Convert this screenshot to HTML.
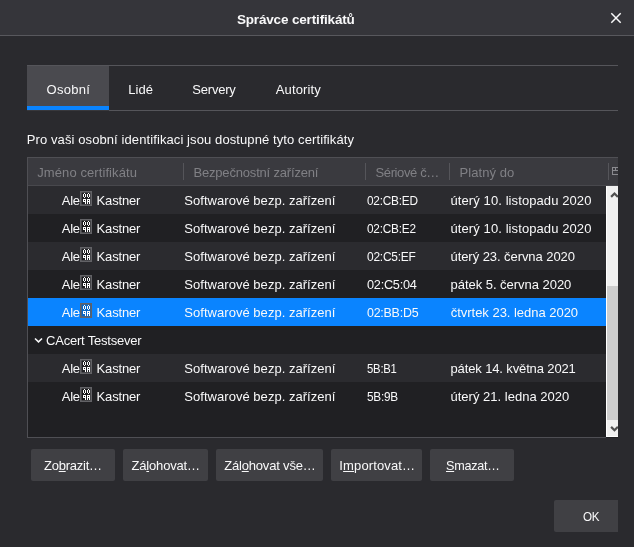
<!DOCTYPE html>
<html><head><meta charset="utf-8"><title>Správce certifikátů</title>
<style>
html,body{margin:0;padding:0}
body{width:634px;height:547px;background:#2a2a2e;position:relative;overflow:hidden;font-family:"Liberation Sans",sans-serif;font-size:13px;color:#f9f9fa}
div,span,svg{position:absolute;box-sizing:border-box}
.t{white-space:pre;line-height:20px;height:20px}
.t u{text-decoration:underline;text-underline-offset:1px;text-decoration-thickness:1px}
.btn{background:#404044;border-radius:2px;height:32px}
.row{left:28px;width:578px;height:28px}
.lt{background:#2b2b2f}
.sep{width:1px;top:163px;height:17px;background:#55555a}
</style></head><body>
<div id="titlebar" style="left:0;top:0;width:634px;height:36px;background:#35353a;border-bottom:1px solid #58585d"></div>
<svg style="left:610px;top:12px" width="12" height="12" viewBox="0 0 12 12"><path d="M1.3 1.3 L10.7 10.7 M10.7 1.3 L1.3 10.7" stroke="#f9f9fa" stroke-width="1.5" fill="none"/></svg>
<div id="tabs" style="left:27px;top:65px;width:591px;height:46px;border-top:1px solid #55555a;border-bottom:1px solid #55555a"></div>
<div id="tabsel" style="left:27px;top:66px;width:82px;height:44px;background:#4a4a4f;border-bottom:4px solid #0a84ff"></div>
<div style="left:27px;top:110px;width:82px;height:1px;background:#38383c"></div>
<div id="list" style="left:27px;top:157px;width:591px;height:281px;background:#202023;border-left:1px solid #4f4f54;border-top:1px solid #4f4f54"></div>
<div id="lbot" style="left:27px;top:437px;width:579px;height:1px;background:#4f4f54"></div>
<div id="lhead" style="left:28px;top:158px;width:590px;height:28px;background:#3a3a3f;border-bottom:1px solid #48484d"></div>
<div class="sep" style="left:183px"></div><div class="sep" style="left:365px"></div><div class="sep" style="left:449px"></div><div class="sep" style="left:608px"></div>
<svg style="left:612px;top:167px" width="6" height="8" viewBox="0 0 6 8" shape-rendering="crispEdges"><path d="M6 0.5 H0.5 V7.5 H6 M0.5 3.5 H6 M3.5 0.5 V3.5" stroke="#8a8a8f" stroke-width="1" fill="none"/></svg>

<div class="row lt" style="top:186px"></div>
<div class="row lt" style="top:242px"></div>
<div class="row lt" style="top:354px"></div>
<div class="row" style="top:298px;background:#0a84ff"></div>
<div id="sb" style="left:606px;top:186px;width:12px;height:251px;background:#f0f0f0;border-left:1px solid #ffffff;border-bottom:1px solid #ffffff"></div>
<div id="thumb" style="left:607px;top:286px;width:11px;height:134px;background:#cdcdcd"></div>
<svg style="left:606px;top:186px" width="12" height="17" viewBox="0 0 12 17"><path d="M5.1 10.9 L8.5 7.5 L11.9 10.9" stroke="#505050" stroke-width="2.2" fill="none"/></svg>
<svg style="left:606px;top:420px" width="12" height="17" viewBox="0 0 12 17"><path d="M5.1 6.9 L8.5 10.3 L11.9 6.9" stroke="#505050" stroke-width="2.2" fill="none"/></svg>
<svg style="left:33.7px;top:337px" width="9" height="7" viewBox="0 0 9 7"><path d="M1 1.5 L4.5 4.8 L8 1.5" stroke="#f9f9fa" stroke-width="1.6" fill="none"/></svg>

<svg class="hb" style="left:80px;top:191px" width="12" height="15" viewBox="0 0 12 15"><rect x="0.8" y="0.8" width="10.4" height="13.4" fill="rgba(0,0,0,0.22)" stroke="#626266" stroke-width="1.6"/><rect x="4" y="2" width="1" height="1" fill="#fff" shape-rendering="crispEdges"/><rect x="3" y="3" width="1" height="1" fill="#fff" shape-rendering="crispEdges"/><rect x="5" y="3" width="1" height="1" fill="#fff" shape-rendering="crispEdges"/><rect x="3" y="4" width="1" height="1" fill="#fff" shape-rendering="crispEdges"/><rect x="5" y="4" width="1" height="1" fill="#fff" shape-rendering="crispEdges"/><rect x="3" y="5" width="1" height="1" fill="#fff" shape-rendering="crispEdges"/><rect x="5" y="5" width="1" height="1" fill="#fff" shape-rendering="crispEdges"/><rect x="4" y="6" width="1" height="1" fill="#fff" shape-rendering="crispEdges"/><rect x="8" y="2" width="1" height="1" fill="#fff" shape-rendering="crispEdges"/><rect x="7" y="3" width="1" height="1" fill="#fff" shape-rendering="crispEdges"/><rect x="9" y="3" width="1" height="1" fill="#fff" shape-rendering="crispEdges"/><rect x="7" y="4" width="1" height="1" fill="#fff" shape-rendering="crispEdges"/><rect x="9" y="4" width="1" height="1" fill="#fff" shape-rendering="crispEdges"/><rect x="7" y="5" width="1" height="1" fill="#fff" shape-rendering="crispEdges"/><rect x="9" y="5" width="1" height="1" fill="#fff" shape-rendering="crispEdges"/><rect x="8" y="6" width="1" height="1" fill="#fff" shape-rendering="crispEdges"/><rect x="3" y="8" width="1" height="1" fill="#fff" shape-rendering="crispEdges"/><rect x="4" y="8" width="1" height="1" fill="#fff" shape-rendering="crispEdges"/><rect x="5" y="8" width="1" height="1" fill="#fff" shape-rendering="crispEdges"/><rect x="3" y="9" width="1" height="1" fill="#fff" shape-rendering="crispEdges"/><rect x="5" y="9" width="1" height="1" fill="#fff" shape-rendering="crispEdges"/><rect x="3" y="10" width="1" height="1" fill="#fff" shape-rendering="crispEdges"/><rect x="4" y="10" width="1" height="1" fill="#fff" shape-rendering="crispEdges"/><rect x="5" y="10" width="1" height="1" fill="#fff" shape-rendering="crispEdges"/><rect x="5" y="11" width="1" height="1" fill="#fff" shape-rendering="crispEdges"/><rect x="5" y="12" width="1" height="1" fill="#fff" shape-rendering="crispEdges"/><rect x="7" y="8" width="1" height="1" fill="#fff" shape-rendering="crispEdges"/><rect x="8" y="8" width="1" height="1" fill="#fff" shape-rendering="crispEdges"/><rect x="9" y="8" width="1" height="1" fill="#fff" shape-rendering="crispEdges"/><rect x="7" y="9" width="1" height="1" fill="#fff" shape-rendering="crispEdges"/><rect x="9" y="9" width="1" height="1" fill="#fff" shape-rendering="crispEdges"/><rect x="7" y="10" width="1" height="1" fill="#fff" shape-rendering="crispEdges"/><rect x="8" y="10" width="1" height="1" fill="#fff" shape-rendering="crispEdges"/><rect x="9" y="10" width="1" height="1" fill="#fff" shape-rendering="crispEdges"/><rect x="7" y="11" width="1" height="1" fill="#fff" shape-rendering="crispEdges"/><rect x="9" y="11" width="1" height="1" fill="#fff" shape-rendering="crispEdges"/><rect x="7" y="12" width="1" height="1" fill="#fff" shape-rendering="crispEdges"/><rect x="9" y="12" width="1" height="1" fill="#fff" shape-rendering="crispEdges"/></svg>
<svg class="hb" style="left:80px;top:219px" width="12" height="15" viewBox="0 0 12 15"><rect x="0.8" y="0.8" width="10.4" height="13.4" fill="rgba(0,0,0,0.22)" stroke="#626266" stroke-width="1.6"/><rect x="4" y="2" width="1" height="1" fill="#fff" shape-rendering="crispEdges"/><rect x="3" y="3" width="1" height="1" fill="#fff" shape-rendering="crispEdges"/><rect x="5" y="3" width="1" height="1" fill="#fff" shape-rendering="crispEdges"/><rect x="3" y="4" width="1" height="1" fill="#fff" shape-rendering="crispEdges"/><rect x="5" y="4" width="1" height="1" fill="#fff" shape-rendering="crispEdges"/><rect x="3" y="5" width="1" height="1" fill="#fff" shape-rendering="crispEdges"/><rect x="5" y="5" width="1" height="1" fill="#fff" shape-rendering="crispEdges"/><rect x="4" y="6" width="1" height="1" fill="#fff" shape-rendering="crispEdges"/><rect x="8" y="2" width="1" height="1" fill="#fff" shape-rendering="crispEdges"/><rect x="7" y="3" width="1" height="1" fill="#fff" shape-rendering="crispEdges"/><rect x="9" y="3" width="1" height="1" fill="#fff" shape-rendering="crispEdges"/><rect x="7" y="4" width="1" height="1" fill="#fff" shape-rendering="crispEdges"/><rect x="9" y="4" width="1" height="1" fill="#fff" shape-rendering="crispEdges"/><rect x="7" y="5" width="1" height="1" fill="#fff" shape-rendering="crispEdges"/><rect x="9" y="5" width="1" height="1" fill="#fff" shape-rendering="crispEdges"/><rect x="8" y="6" width="1" height="1" fill="#fff" shape-rendering="crispEdges"/><rect x="3" y="8" width="1" height="1" fill="#fff" shape-rendering="crispEdges"/><rect x="4" y="8" width="1" height="1" fill="#fff" shape-rendering="crispEdges"/><rect x="5" y="8" width="1" height="1" fill="#fff" shape-rendering="crispEdges"/><rect x="3" y="9" width="1" height="1" fill="#fff" shape-rendering="crispEdges"/><rect x="5" y="9" width="1" height="1" fill="#fff" shape-rendering="crispEdges"/><rect x="3" y="10" width="1" height="1" fill="#fff" shape-rendering="crispEdges"/><rect x="4" y="10" width="1" height="1" fill="#fff" shape-rendering="crispEdges"/><rect x="5" y="10" width="1" height="1" fill="#fff" shape-rendering="crispEdges"/><rect x="5" y="11" width="1" height="1" fill="#fff" shape-rendering="crispEdges"/><rect x="5" y="12" width="1" height="1" fill="#fff" shape-rendering="crispEdges"/><rect x="7" y="8" width="1" height="1" fill="#fff" shape-rendering="crispEdges"/><rect x="8" y="8" width="1" height="1" fill="#fff" shape-rendering="crispEdges"/><rect x="9" y="8" width="1" height="1" fill="#fff" shape-rendering="crispEdges"/><rect x="7" y="9" width="1" height="1" fill="#fff" shape-rendering="crispEdges"/><rect x="9" y="9" width="1" height="1" fill="#fff" shape-rendering="crispEdges"/><rect x="7" y="10" width="1" height="1" fill="#fff" shape-rendering="crispEdges"/><rect x="8" y="10" width="1" height="1" fill="#fff" shape-rendering="crispEdges"/><rect x="9" y="10" width="1" height="1" fill="#fff" shape-rendering="crispEdges"/><rect x="7" y="11" width="1" height="1" fill="#fff" shape-rendering="crispEdges"/><rect x="9" y="11" width="1" height="1" fill="#fff" shape-rendering="crispEdges"/><rect x="7" y="12" width="1" height="1" fill="#fff" shape-rendering="crispEdges"/><rect x="9" y="12" width="1" height="1" fill="#fff" shape-rendering="crispEdges"/></svg>
<svg class="hb" style="left:80px;top:247px" width="12" height="15" viewBox="0 0 12 15"><rect x="0.8" y="0.8" width="10.4" height="13.4" fill="rgba(0,0,0,0.22)" stroke="#626266" stroke-width="1.6"/><rect x="4" y="2" width="1" height="1" fill="#fff" shape-rendering="crispEdges"/><rect x="3" y="3" width="1" height="1" fill="#fff" shape-rendering="crispEdges"/><rect x="5" y="3" width="1" height="1" fill="#fff" shape-rendering="crispEdges"/><rect x="3" y="4" width="1" height="1" fill="#fff" shape-rendering="crispEdges"/><rect x="5" y="4" width="1" height="1" fill="#fff" shape-rendering="crispEdges"/><rect x="3" y="5" width="1" height="1" fill="#fff" shape-rendering="crispEdges"/><rect x="5" y="5" width="1" height="1" fill="#fff" shape-rendering="crispEdges"/><rect x="4" y="6" width="1" height="1" fill="#fff" shape-rendering="crispEdges"/><rect x="8" y="2" width="1" height="1" fill="#fff" shape-rendering="crispEdges"/><rect x="7" y="3" width="1" height="1" fill="#fff" shape-rendering="crispEdges"/><rect x="9" y="3" width="1" height="1" fill="#fff" shape-rendering="crispEdges"/><rect x="7" y="4" width="1" height="1" fill="#fff" shape-rendering="crispEdges"/><rect x="9" y="4" width="1" height="1" fill="#fff" shape-rendering="crispEdges"/><rect x="7" y="5" width="1" height="1" fill="#fff" shape-rendering="crispEdges"/><rect x="9" y="5" width="1" height="1" fill="#fff" shape-rendering="crispEdges"/><rect x="8" y="6" width="1" height="1" fill="#fff" shape-rendering="crispEdges"/><rect x="3" y="8" width="1" height="1" fill="#fff" shape-rendering="crispEdges"/><rect x="4" y="8" width="1" height="1" fill="#fff" shape-rendering="crispEdges"/><rect x="5" y="8" width="1" height="1" fill="#fff" shape-rendering="crispEdges"/><rect x="3" y="9" width="1" height="1" fill="#fff" shape-rendering="crispEdges"/><rect x="5" y="9" width="1" height="1" fill="#fff" shape-rendering="crispEdges"/><rect x="3" y="10" width="1" height="1" fill="#fff" shape-rendering="crispEdges"/><rect x="4" y="10" width="1" height="1" fill="#fff" shape-rendering="crispEdges"/><rect x="5" y="10" width="1" height="1" fill="#fff" shape-rendering="crispEdges"/><rect x="5" y="11" width="1" height="1" fill="#fff" shape-rendering="crispEdges"/><rect x="5" y="12" width="1" height="1" fill="#fff" shape-rendering="crispEdges"/><rect x="7" y="8" width="1" height="1" fill="#fff" shape-rendering="crispEdges"/><rect x="8" y="8" width="1" height="1" fill="#fff" shape-rendering="crispEdges"/><rect x="9" y="8" width="1" height="1" fill="#fff" shape-rendering="crispEdges"/><rect x="7" y="9" width="1" height="1" fill="#fff" shape-rendering="crispEdges"/><rect x="9" y="9" width="1" height="1" fill="#fff" shape-rendering="crispEdges"/><rect x="7" y="10" width="1" height="1" fill="#fff" shape-rendering="crispEdges"/><rect x="8" y="10" width="1" height="1" fill="#fff" shape-rendering="crispEdges"/><rect x="9" y="10" width="1" height="1" fill="#fff" shape-rendering="crispEdges"/><rect x="7" y="11" width="1" height="1" fill="#fff" shape-rendering="crispEdges"/><rect x="9" y="11" width="1" height="1" fill="#fff" shape-rendering="crispEdges"/><rect x="7" y="12" width="1" height="1" fill="#fff" shape-rendering="crispEdges"/><rect x="9" y="12" width="1" height="1" fill="#fff" shape-rendering="crispEdges"/></svg>
<svg class="hb" style="left:80px;top:275px" width="12" height="15" viewBox="0 0 12 15"><rect x="0.8" y="0.8" width="10.4" height="13.4" fill="rgba(0,0,0,0.22)" stroke="#626266" stroke-width="1.6"/><rect x="4" y="2" width="1" height="1" fill="#fff" shape-rendering="crispEdges"/><rect x="3" y="3" width="1" height="1" fill="#fff" shape-rendering="crispEdges"/><rect x="5" y="3" width="1" height="1" fill="#fff" shape-rendering="crispEdges"/><rect x="3" y="4" width="1" height="1" fill="#fff" shape-rendering="crispEdges"/><rect x="5" y="4" width="1" height="1" fill="#fff" shape-rendering="crispEdges"/><rect x="3" y="5" width="1" height="1" fill="#fff" shape-rendering="crispEdges"/><rect x="5" y="5" width="1" height="1" fill="#fff" shape-rendering="crispEdges"/><rect x="4" y="6" width="1" height="1" fill="#fff" shape-rendering="crispEdges"/><rect x="8" y="2" width="1" height="1" fill="#fff" shape-rendering="crispEdges"/><rect x="7" y="3" width="1" height="1" fill="#fff" shape-rendering="crispEdges"/><rect x="9" y="3" width="1" height="1" fill="#fff" shape-rendering="crispEdges"/><rect x="7" y="4" width="1" height="1" fill="#fff" shape-rendering="crispEdges"/><rect x="9" y="4" width="1" height="1" fill="#fff" shape-rendering="crispEdges"/><rect x="7" y="5" width="1" height="1" fill="#fff" shape-rendering="crispEdges"/><rect x="9" y="5" width="1" height="1" fill="#fff" shape-rendering="crispEdges"/><rect x="8" y="6" width="1" height="1" fill="#fff" shape-rendering="crispEdges"/><rect x="3" y="8" width="1" height="1" fill="#fff" shape-rendering="crispEdges"/><rect x="4" y="8" width="1" height="1" fill="#fff" shape-rendering="crispEdges"/><rect x="5" y="8" width="1" height="1" fill="#fff" shape-rendering="crispEdges"/><rect x="3" y="9" width="1" height="1" fill="#fff" shape-rendering="crispEdges"/><rect x="5" y="9" width="1" height="1" fill="#fff" shape-rendering="crispEdges"/><rect x="3" y="10" width="1" height="1" fill="#fff" shape-rendering="crispEdges"/><rect x="4" y="10" width="1" height="1" fill="#fff" shape-rendering="crispEdges"/><rect x="5" y="10" width="1" height="1" fill="#fff" shape-rendering="crispEdges"/><rect x="5" y="11" width="1" height="1" fill="#fff" shape-rendering="crispEdges"/><rect x="5" y="12" width="1" height="1" fill="#fff" shape-rendering="crispEdges"/><rect x="7" y="8" width="1" height="1" fill="#fff" shape-rendering="crispEdges"/><rect x="8" y="8" width="1" height="1" fill="#fff" shape-rendering="crispEdges"/><rect x="9" y="8" width="1" height="1" fill="#fff" shape-rendering="crispEdges"/><rect x="7" y="9" width="1" height="1" fill="#fff" shape-rendering="crispEdges"/><rect x="9" y="9" width="1" height="1" fill="#fff" shape-rendering="crispEdges"/><rect x="7" y="10" width="1" height="1" fill="#fff" shape-rendering="crispEdges"/><rect x="8" y="10" width="1" height="1" fill="#fff" shape-rendering="crispEdges"/><rect x="9" y="10" width="1" height="1" fill="#fff" shape-rendering="crispEdges"/><rect x="7" y="11" width="1" height="1" fill="#fff" shape-rendering="crispEdges"/><rect x="9" y="11" width="1" height="1" fill="#fff" shape-rendering="crispEdges"/><rect x="7" y="12" width="1" height="1" fill="#fff" shape-rendering="crispEdges"/><rect x="9" y="12" width="1" height="1" fill="#fff" shape-rendering="crispEdges"/></svg>
<svg class="hb" style="left:80px;top:303px" width="12" height="15" viewBox="0 0 12 15"><rect x="0.8" y="0.8" width="10.4" height="13.4" fill="rgba(0,0,0,0.22)" stroke="#626266" stroke-width="1.6"/><rect x="4" y="2" width="1" height="1" fill="#fff" shape-rendering="crispEdges"/><rect x="3" y="3" width="1" height="1" fill="#fff" shape-rendering="crispEdges"/><rect x="5" y="3" width="1" height="1" fill="#fff" shape-rendering="crispEdges"/><rect x="3" y="4" width="1" height="1" fill="#fff" shape-rendering="crispEdges"/><rect x="5" y="4" width="1" height="1" fill="#fff" shape-rendering="crispEdges"/><rect x="3" y="5" width="1" height="1" fill="#fff" shape-rendering="crispEdges"/><rect x="5" y="5" width="1" height="1" fill="#fff" shape-rendering="crispEdges"/><rect x="4" y="6" width="1" height="1" fill="#fff" shape-rendering="crispEdges"/><rect x="8" y="2" width="1" height="1" fill="#fff" shape-rendering="crispEdges"/><rect x="7" y="3" width="1" height="1" fill="#fff" shape-rendering="crispEdges"/><rect x="9" y="3" width="1" height="1" fill="#fff" shape-rendering="crispEdges"/><rect x="7" y="4" width="1" height="1" fill="#fff" shape-rendering="crispEdges"/><rect x="9" y="4" width="1" height="1" fill="#fff" shape-rendering="crispEdges"/><rect x="7" y="5" width="1" height="1" fill="#fff" shape-rendering="crispEdges"/><rect x="9" y="5" width="1" height="1" fill="#fff" shape-rendering="crispEdges"/><rect x="8" y="6" width="1" height="1" fill="#fff" shape-rendering="crispEdges"/><rect x="3" y="8" width="1" height="1" fill="#fff" shape-rendering="crispEdges"/><rect x="4" y="8" width="1" height="1" fill="#fff" shape-rendering="crispEdges"/><rect x="5" y="8" width="1" height="1" fill="#fff" shape-rendering="crispEdges"/><rect x="3" y="9" width="1" height="1" fill="#fff" shape-rendering="crispEdges"/><rect x="5" y="9" width="1" height="1" fill="#fff" shape-rendering="crispEdges"/><rect x="3" y="10" width="1" height="1" fill="#fff" shape-rendering="crispEdges"/><rect x="4" y="10" width="1" height="1" fill="#fff" shape-rendering="crispEdges"/><rect x="5" y="10" width="1" height="1" fill="#fff" shape-rendering="crispEdges"/><rect x="5" y="11" width="1" height="1" fill="#fff" shape-rendering="crispEdges"/><rect x="5" y="12" width="1" height="1" fill="#fff" shape-rendering="crispEdges"/><rect x="7" y="8" width="1" height="1" fill="#fff" shape-rendering="crispEdges"/><rect x="8" y="8" width="1" height="1" fill="#fff" shape-rendering="crispEdges"/><rect x="9" y="8" width="1" height="1" fill="#fff" shape-rendering="crispEdges"/><rect x="7" y="9" width="1" height="1" fill="#fff" shape-rendering="crispEdges"/><rect x="9" y="9" width="1" height="1" fill="#fff" shape-rendering="crispEdges"/><rect x="7" y="10" width="1" height="1" fill="#fff" shape-rendering="crispEdges"/><rect x="8" y="10" width="1" height="1" fill="#fff" shape-rendering="crispEdges"/><rect x="9" y="10" width="1" height="1" fill="#fff" shape-rendering="crispEdges"/><rect x="7" y="11" width="1" height="1" fill="#fff" shape-rendering="crispEdges"/><rect x="9" y="11" width="1" height="1" fill="#fff" shape-rendering="crispEdges"/><rect x="7" y="12" width="1" height="1" fill="#fff" shape-rendering="crispEdges"/><rect x="9" y="12" width="1" height="1" fill="#fff" shape-rendering="crispEdges"/></svg>
<svg class="hb" style="left:80px;top:359px" width="12" height="15" viewBox="0 0 12 15"><rect x="0.8" y="0.8" width="10.4" height="13.4" fill="rgba(0,0,0,0.22)" stroke="#626266" stroke-width="1.6"/><rect x="4" y="2" width="1" height="1" fill="#fff" shape-rendering="crispEdges"/><rect x="3" y="3" width="1" height="1" fill="#fff" shape-rendering="crispEdges"/><rect x="5" y="3" width="1" height="1" fill="#fff" shape-rendering="crispEdges"/><rect x="3" y="4" width="1" height="1" fill="#fff" shape-rendering="crispEdges"/><rect x="5" y="4" width="1" height="1" fill="#fff" shape-rendering="crispEdges"/><rect x="3" y="5" width="1" height="1" fill="#fff" shape-rendering="crispEdges"/><rect x="5" y="5" width="1" height="1" fill="#fff" shape-rendering="crispEdges"/><rect x="4" y="6" width="1" height="1" fill="#fff" shape-rendering="crispEdges"/><rect x="8" y="2" width="1" height="1" fill="#fff" shape-rendering="crispEdges"/><rect x="7" y="3" width="1" height="1" fill="#fff" shape-rendering="crispEdges"/><rect x="9" y="3" width="1" height="1" fill="#fff" shape-rendering="crispEdges"/><rect x="7" y="4" width="1" height="1" fill="#fff" shape-rendering="crispEdges"/><rect x="9" y="4" width="1" height="1" fill="#fff" shape-rendering="crispEdges"/><rect x="7" y="5" width="1" height="1" fill="#fff" shape-rendering="crispEdges"/><rect x="9" y="5" width="1" height="1" fill="#fff" shape-rendering="crispEdges"/><rect x="8" y="6" width="1" height="1" fill="#fff" shape-rendering="crispEdges"/><rect x="3" y="8" width="1" height="1" fill="#fff" shape-rendering="crispEdges"/><rect x="4" y="8" width="1" height="1" fill="#fff" shape-rendering="crispEdges"/><rect x="5" y="8" width="1" height="1" fill="#fff" shape-rendering="crispEdges"/><rect x="3" y="9" width="1" height="1" fill="#fff" shape-rendering="crispEdges"/><rect x="5" y="9" width="1" height="1" fill="#fff" shape-rendering="crispEdges"/><rect x="3" y="10" width="1" height="1" fill="#fff" shape-rendering="crispEdges"/><rect x="4" y="10" width="1" height="1" fill="#fff" shape-rendering="crispEdges"/><rect x="5" y="10" width="1" height="1" fill="#fff" shape-rendering="crispEdges"/><rect x="5" y="11" width="1" height="1" fill="#fff" shape-rendering="crispEdges"/><rect x="5" y="12" width="1" height="1" fill="#fff" shape-rendering="crispEdges"/><rect x="7" y="8" width="1" height="1" fill="#fff" shape-rendering="crispEdges"/><rect x="8" y="8" width="1" height="1" fill="#fff" shape-rendering="crispEdges"/><rect x="9" y="8" width="1" height="1" fill="#fff" shape-rendering="crispEdges"/><rect x="7" y="9" width="1" height="1" fill="#fff" shape-rendering="crispEdges"/><rect x="9" y="9" width="1" height="1" fill="#fff" shape-rendering="crispEdges"/><rect x="7" y="10" width="1" height="1" fill="#fff" shape-rendering="crispEdges"/><rect x="8" y="10" width="1" height="1" fill="#fff" shape-rendering="crispEdges"/><rect x="9" y="10" width="1" height="1" fill="#fff" shape-rendering="crispEdges"/><rect x="7" y="11" width="1" height="1" fill="#fff" shape-rendering="crispEdges"/><rect x="9" y="11" width="1" height="1" fill="#fff" shape-rendering="crispEdges"/><rect x="7" y="12" width="1" height="1" fill="#fff" shape-rendering="crispEdges"/><rect x="9" y="12" width="1" height="1" fill="#fff" shape-rendering="crispEdges"/></svg>
<svg class="hb" style="left:80px;top:387px" width="12" height="15" viewBox="0 0 12 15"><rect x="0.8" y="0.8" width="10.4" height="13.4" fill="rgba(0,0,0,0.22)" stroke="#626266" stroke-width="1.6"/><rect x="4" y="2" width="1" height="1" fill="#fff" shape-rendering="crispEdges"/><rect x="3" y="3" width="1" height="1" fill="#fff" shape-rendering="crispEdges"/><rect x="5" y="3" width="1" height="1" fill="#fff" shape-rendering="crispEdges"/><rect x="3" y="4" width="1" height="1" fill="#fff" shape-rendering="crispEdges"/><rect x="5" y="4" width="1" height="1" fill="#fff" shape-rendering="crispEdges"/><rect x="3" y="5" width="1" height="1" fill="#fff" shape-rendering="crispEdges"/><rect x="5" y="5" width="1" height="1" fill="#fff" shape-rendering="crispEdges"/><rect x="4" y="6" width="1" height="1" fill="#fff" shape-rendering="crispEdges"/><rect x="8" y="2" width="1" height="1" fill="#fff" shape-rendering="crispEdges"/><rect x="7" y="3" width="1" height="1" fill="#fff" shape-rendering="crispEdges"/><rect x="9" y="3" width="1" height="1" fill="#fff" shape-rendering="crispEdges"/><rect x="7" y="4" width="1" height="1" fill="#fff" shape-rendering="crispEdges"/><rect x="9" y="4" width="1" height="1" fill="#fff" shape-rendering="crispEdges"/><rect x="7" y="5" width="1" height="1" fill="#fff" shape-rendering="crispEdges"/><rect x="9" y="5" width="1" height="1" fill="#fff" shape-rendering="crispEdges"/><rect x="8" y="6" width="1" height="1" fill="#fff" shape-rendering="crispEdges"/><rect x="3" y="8" width="1" height="1" fill="#fff" shape-rendering="crispEdges"/><rect x="4" y="8" width="1" height="1" fill="#fff" shape-rendering="crispEdges"/><rect x="5" y="8" width="1" height="1" fill="#fff" shape-rendering="crispEdges"/><rect x="3" y="9" width="1" height="1" fill="#fff" shape-rendering="crispEdges"/><rect x="5" y="9" width="1" height="1" fill="#fff" shape-rendering="crispEdges"/><rect x="3" y="10" width="1" height="1" fill="#fff" shape-rendering="crispEdges"/><rect x="4" y="10" width="1" height="1" fill="#fff" shape-rendering="crispEdges"/><rect x="5" y="10" width="1" height="1" fill="#fff" shape-rendering="crispEdges"/><rect x="5" y="11" width="1" height="1" fill="#fff" shape-rendering="crispEdges"/><rect x="5" y="12" width="1" height="1" fill="#fff" shape-rendering="crispEdges"/><rect x="7" y="8" width="1" height="1" fill="#fff" shape-rendering="crispEdges"/><rect x="8" y="8" width="1" height="1" fill="#fff" shape-rendering="crispEdges"/><rect x="9" y="8" width="1" height="1" fill="#fff" shape-rendering="crispEdges"/><rect x="7" y="9" width="1" height="1" fill="#fff" shape-rendering="crispEdges"/><rect x="9" y="9" width="1" height="1" fill="#fff" shape-rendering="crispEdges"/><rect x="7" y="10" width="1" height="1" fill="#fff" shape-rendering="crispEdges"/><rect x="8" y="10" width="1" height="1" fill="#fff" shape-rendering="crispEdges"/><rect x="9" y="10" width="1" height="1" fill="#fff" shape-rendering="crispEdges"/><rect x="7" y="11" width="1" height="1" fill="#fff" shape-rendering="crispEdges"/><rect x="9" y="11" width="1" height="1" fill="#fff" shape-rendering="crispEdges"/><rect x="7" y="12" width="1" height="1" fill="#fff" shape-rendering="crispEdges"/><rect x="9" y="12" width="1" height="1" fill="#fff" shape-rendering="crispEdges"/></svg>
<div class="btn" style="left:31px;top:449px;width:84px"></div>
<div class="btn" style="left:123px;top:449px;width:85px"></div>
<div class="btn" style="left:216px;top:449px;width:107px"></div>
<div class="btn" style="left:331px;top:449px;width:91px"></div>
<div class="btn" style="left:430px;top:449px;width:84px"></div>
<div class="btn" style="left:554px;top:500px;width:64px;border-radius:2px 0 0 2px"></div>
<div id="txt" style="left:0;top:0;width:634px;height:547px;will-change:transform">
<span class="t" id="title" style="left:236.88px;top:9.7px;font-size:13.5px;font-weight:700;color:#f9f9fa;letter-spacing:-0.157px">Správce certifikátů</span>
<span class="t" id="tab1" style="left:46.59px;top:79.5px;font-size:13px;font-weight:400;color:#f9f9fa;letter-spacing:0.256px">Osobní</span>
<span class="t" id="tab2" style="left:128.35px;top:79.5px;font-size:13px;font-weight:400;color:#f9f9fa;letter-spacing:0.035px">Lidé</span>
<span class="t" id="tab3" style="left:192.31px;top:79.5px;font-size:13px;font-weight:400;color:#f9f9fa;letter-spacing:-0.209px">Servery</span>
<span class="t" id="tab4" style="left:275.76px;top:79.5px;font-size:13px;font-weight:400;color:#f9f9fa;letter-spacing:0.140px">Autority</span>
<span class="t" id="desc" style="left:26.75px;top:129.5px;font-size:13px;font-weight:400;color:#f9f9fa;letter-spacing:0.098px">Pro vaši osobní identifikaci jsou dostupné tyto certifikáty</span>
<span class="t" id="h1" style="left:37.28px;top:162.5px;font-size:13px;font-weight:400;color:#808085;letter-spacing:0.086px">Jméno certifikátu</span>
<span class="t" id="h2" style="left:193.45px;top:162.5px;font-size:13px;font-weight:400;color:#808085;letter-spacing:-0.180px">Bezpečnostní zařízení</span>
<span class="t" id="h3" style="left:375.57px;top:162.5px;font-size:13px;font-weight:400;color:#808085;letter-spacing:-0.390px">Sériové č…</span>
<span class="t" id="h4" style="left:459.57px;top:162.5px;font-size:13px;font-weight:400;color:#808085;letter-spacing:0.063px">Platný do</span>
<span class="t" id="r0a" style="left:61.85px;top:190.5px;font-size:13px;font-weight:400;color:#f9f9fa;letter-spacing:-0.345px">Ale</span>
<span class="t" id="r0k" style="left:96.60px;top:190.5px;font-size:13px;font-weight:400;color:#f9f9fa;letter-spacing:-0.165px">Kastner</span>
<span class="t" id="r0s" style="left:184.37px;top:190.5px;font-size:13px;font-weight:400;color:#f9f9fa;letter-spacing:0.032px">Softwarové bezp. zařízení</span>
<span class="t" id="r0n" style="left:367.04px;top:190.5px;font-size:13px;font-weight:400;color:#f9f9fa;letter-spacing:-0.250px;transform:scaleX(0.9099);transform-origin:0 0">02:CB:ED</span>
<span class="t" id="r0d" style="left:450.51px;top:190.5px;font-size:13px;font-weight:400;color:#f9f9fa;letter-spacing:0.094px">úterý 10. listopadu 2020</span>
<span class="t" id="r1a" style="left:61.85px;top:218.5px;font-size:13px;font-weight:400;color:#f9f9fa;letter-spacing:-0.345px">Ale</span>
<span class="t" id="r1k" style="left:96.60px;top:218.5px;font-size:13px;font-weight:400;color:#f9f9fa;letter-spacing:-0.165px">Kastner</span>
<span class="t" id="r1s" style="left:184.37px;top:218.5px;font-size:13px;font-weight:400;color:#f9f9fa;letter-spacing:0.032px">Softwarové bezp. zařízení</span>
<span class="t" id="r1n" style="left:367.03px;top:218.5px;font-size:13px;font-weight:400;color:#f9f9fa;letter-spacing:-0.250px;transform:scaleX(0.9096);transform-origin:0 0">02:CB:E2</span>
<span class="t" id="r1d" style="left:450.51px;top:218.5px;font-size:13px;font-weight:400;color:#f9f9fa;letter-spacing:0.094px">úterý 10. listopadu 2020</span>
<span class="t" id="r2a" style="left:61.85px;top:246.5px;font-size:13px;font-weight:400;color:#f9f9fa;letter-spacing:-0.345px">Ale</span>
<span class="t" id="r2k" style="left:96.60px;top:246.5px;font-size:13px;font-weight:400;color:#f9f9fa;letter-spacing:-0.165px">Kastner</span>
<span class="t" id="r2s" style="left:184.37px;top:246.5px;font-size:13px;font-weight:400;color:#f9f9fa;letter-spacing:0.032px">Softwarové bezp. zařízení</span>
<span class="t" id="r2n" style="left:367.03px;top:246.5px;font-size:13px;font-weight:400;color:#f9f9fa;letter-spacing:-0.250px;transform:scaleX(0.9180);transform-origin:0 0">02:C5:EF</span>
<span class="t" id="r2d" style="left:450.49px;top:246.5px;font-size:13px;font-weight:400;color:#f9f9fa;letter-spacing:-0.062px">úterý 23. června 2020</span>
<span class="t" id="r3a" style="left:61.85px;top:274.5px;font-size:13px;font-weight:400;color:#f9f9fa;letter-spacing:-0.345px">Ale</span>
<span class="t" id="r3k" style="left:96.60px;top:274.5px;font-size:13px;font-weight:400;color:#f9f9fa;letter-spacing:-0.165px">Kastner</span>
<span class="t" id="r3s" style="left:184.37px;top:274.5px;font-size:13px;font-weight:400;color:#f9f9fa;letter-spacing:0.032px">Softwarové bezp. zařízení</span>
<span class="t" id="r3n" style="left:367.42px;top:274.5px;font-size:13px;font-weight:400;color:#f9f9fa;letter-spacing:-0.250px;transform:scaleX(0.9777);transform-origin:0 0">02:C5:04</span>
<span class="t" id="r3d" style="left:450.52px;top:274.5px;font-size:13px;font-weight:400;color:#f9f9fa;letter-spacing:-0.033px">pátek 5. června 2020</span>
<span class="t" id="r4a" style="left:61.85px;top:302.5px;font-size:13px;font-weight:400;color:#f9f9fa;letter-spacing:-0.345px">Ale</span>
<span class="t" id="r4k" style="left:96.60px;top:302.5px;font-size:13px;font-weight:400;color:#f9f9fa;letter-spacing:-0.165px">Kastner</span>
<span class="t" id="r4s" style="left:184.37px;top:302.5px;font-size:13px;font-weight:400;color:#f9f9fa;letter-spacing:0.032px">Softwarové bezp. zařízení</span>
<span class="t" id="r4n" style="left:366.99px;top:302.5px;font-size:13px;font-weight:400;color:#f9f9fa;letter-spacing:-0.250px;transform:scaleX(0.9565);transform-origin:0 0">02:BB:D5</span>
<span class="t" id="r4d" style="left:450.78px;top:302.5px;font-size:13px;font-weight:400;color:#f9f9fa;letter-spacing:-0.029px">čtvrtek 23. ledna 2020</span>
<span class="t" id="r5a" style="left:61.85px;top:358.5px;font-size:13px;font-weight:400;color:#f9f9fa;letter-spacing:-0.345px">Ale</span>
<span class="t" id="r5k" style="left:96.60px;top:358.5px;font-size:13px;font-weight:400;color:#f9f9fa;letter-spacing:-0.165px">Kastner</span>
<span class="t" id="r5s" style="left:184.37px;top:358.5px;font-size:13px;font-weight:400;color:#f9f9fa;letter-spacing:0.032px">Softwarové bezp. zařízení</span>
<span class="t" id="r5n" style="left:367.03px;top:358.5px;font-size:13px;font-weight:400;color:#f9f9fa;letter-spacing:-0.250px;transform:scaleX(0.8688);transform-origin:0 0">5B:B1</span>
<span class="t" id="r5d" style="left:450.52px;top:358.5px;font-size:13px;font-weight:400;color:#f9f9fa;letter-spacing:-0.132px">pátek 14. května 2021</span>
<span class="t" id="r6a" style="left:61.85px;top:386.5px;font-size:13px;font-weight:400;color:#f9f9fa;letter-spacing:-0.345px">Ale</span>
<span class="t" id="r6k" style="left:96.60px;top:386.5px;font-size:13px;font-weight:400;color:#f9f9fa;letter-spacing:-0.165px">Kastner</span>
<span class="t" id="r6s" style="left:184.37px;top:386.5px;font-size:13px;font-weight:400;color:#f9f9fa;letter-spacing:0.032px">Softwarové bezp. zařízení</span>
<span class="t" id="r6n" style="left:366.95px;top:386.5px;font-size:13px;font-weight:400;color:#f9f9fa;letter-spacing:-0.250px;transform:scaleX(0.9070);transform-origin:0 0">5B:9B</span>
<span class="t" id="r6d" style="left:450.51px;top:386.5px;font-size:13px;font-weight:400;color:#f9f9fa;letter-spacing:0.016px">úterý 21. ledna 2020</span>
<span class="t" id="grp" style="left:46.01px;top:330.5px;font-size:13px;font-weight:400;color:#f9f9fa;letter-spacing:-0.211px">CAcert Testsever</span>
<span class="t" id="b1" style="left:44.00px;top:455.5px;font-size:13px;font-weight:400;color:#f9f9fa;letter-spacing:-0.240px">Zo<u>b</u>razit…</span>
<span class="t" id="b2" style="left:131.56px;top:455.5px;font-size:13px;font-weight:400;color:#f9f9fa;letter-spacing:-0.189px">Zá<u>l</u>ohovat…</span>
<span class="t" id="b3" style="left:224.21px;top:455.5px;font-size:13px;font-weight:400;color:#f9f9fa;letter-spacing:-0.184px">Zál<u>o</u>hovat vše…</span>
<span class="t" id="b4" style="left:339.33px;top:455.5px;font-size:13px;font-weight:400;color:#f9f9fa;letter-spacing:0.133px">I<u>m</u>portovat…</span>
<span class="t" id="b5" style="left:446.37px;top:455.5px;font-size:13px;font-weight:400;color:#f9f9fa;letter-spacing:-0.250px;transform:scaleX(0.9689);transform-origin:0 0"><u>S</u>mazat…</span>
<span class="t" id="ok" style="left:583.41px;top:507.4px;font-size:13px;font-weight:400;color:#f9f9fa;letter-spacing:-0.250px;transform:scaleX(0.8967);transform-origin:0 0">OK</span>
</div>
</body></html>
